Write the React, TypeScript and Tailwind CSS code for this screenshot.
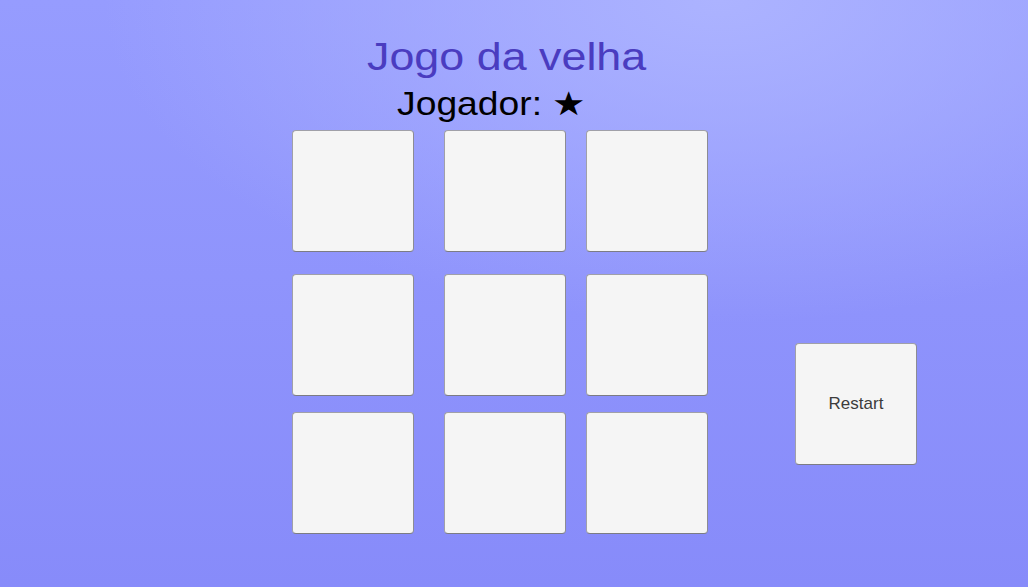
const Cell = ({ label }: { label?: string }) => (
  <button className="w-[122px] h-[122px] rounded-[4px] bg-[#f5f5f5] border border-[#a0a0a8] border-b-[#7c7c84] border-r-[#8c8c94] text-[17px] text-[#3c3c3c]">
    {label}
  </button>
);

export default function App() {
  return (
    <div
      className="w-full h-[587px] overflow-hidden bg-[radial-gradient(ellipse_60%_55%_at_70%_0%,#acb3ff_0%,rgba(172,179,255,0)_100%),linear-gradient(to_bottom,#969cfe,#878bfa)]"
      style={{ fontFamily: '"Liberation Sans", Arial, sans-serif' }}
    >
      <div className="flex items-start pl-[292px]">
        {/* board column */}
        <div className="flex flex-col w-[415px] pt-[39px]">
          <div className="pl-[75px] h-[36px] leading-[36px]">
            <span className="inline-block origin-left scale-x-[1.18] text-[38px] text-[#4a3cc0] whitespace-nowrap">
              Jogo da velha
            </span>
          </div>
          <div className="pl-[105px] mt-[13px] h-[32px] leading-[32px]">
            <span className="inline-block origin-left scale-x-[1.13] text-[33px] text-black whitespace-nowrap">
              Jogador: ★
            </span>
          </div>

          <div className="mt-[10px] grid grid-cols-[152px_142px_122px] grid-rows-[144px_138px_122px]">
            {Array.from({ length: 9 }).map((_, i) => (
              <Cell key={i} />
            ))}
          </div>
        </div>

        {/* restart */}
        <div className="ml-[88px] mt-[343px]">
          <Cell label="Restart" />
        </div>
      </div>
    </div>
  );
}
